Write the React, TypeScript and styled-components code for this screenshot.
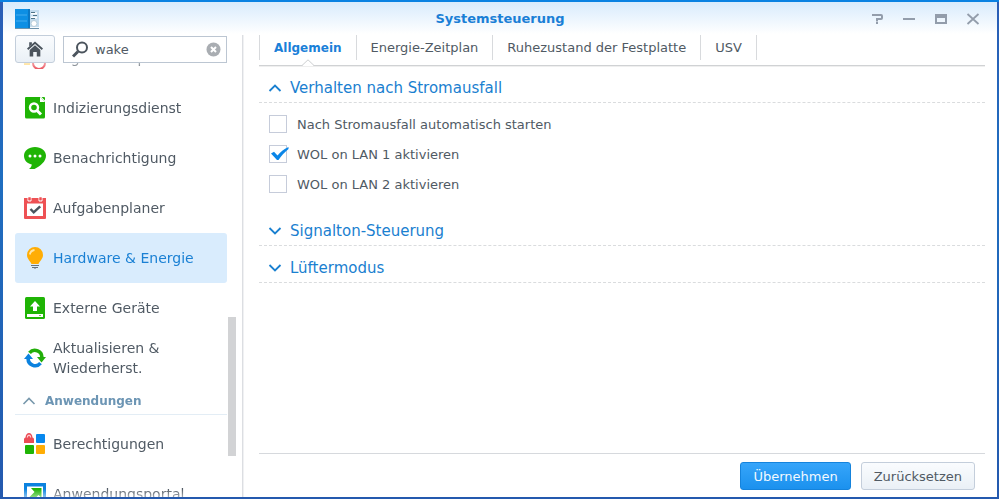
import React, { useLayoutEffect, useRef, useState } from "react";
import styled, { createGlobalStyle, css } from "styled-components";

const GlobalStyle = createGlobalStyle`
  * { box-sizing: border-box; }
  body { margin: 0; background: #ffffff; }
  body, button, input { font-family: "DejaVu Sans", Verdana, sans-serif; font-size: 13px; color: #505a64; }
  button { cursor: pointer; }
`;

const Desktop = styled.div`
  display: flex;
  height: 100vh;
  padding: 2px 2px 2px 3px;
  background: linear-gradient(#0a82e2 2px, transparent 2px), linear-gradient(#2b5db5, #1f6ec0 35%, #2459ae);
`;

const Window = styled.div`
  display: flex;
  flex-direction: column;
  flex: 1;
  min-width: 0;
  background: linear-gradient(#d8ebfc, #ffffff 32px);
`;

const TitleBar = styled.header`
  display: grid;
  grid-template-columns: 1fr auto 1fr;
  align-items: center;
  flex: none;
  height: 33px;
  padding: 0 12px;
`;

const Title = styled.h1`
  margin: 0;
  font-size: 13px;
  font-weight: bold;
  color: #1a7fd6;
`;

const WindowControls = styled.div`
  display: flex;
  justify-content: flex-end;
  gap: 16px;
  padding-right: 4px;
`;

const ControlButton = styled.button`
  display: flex;
  width: 16px;
  height: 16px;
  padding: 0;
  border: 0;
  background: none;
`;

const Body = styled.div`
  display: flex;
  flex: 1;
  min-height: 0;
`;

const Sidebar = styled.aside`
  display: flex;
  flex-direction: column;
  flex: none;
  width: 240px;
  padding-left: 12px;
  border-right: 1px solid #dcdee2;
  box-shadow: 1px 0 0 #f0f1f3;
`;

const SearchRow = styled.div`
  display: flex;
  gap: 8px;
  flex: none;
  height: 28px;
  padding-right: 15px;
`;

const HomeButton = styled.button`
  display: flex;
  align-items: center;
  justify-content: center;
  flex: none;
  width: 40px;
  padding: 0;
  border: 1px solid #c3cedb;
  border-radius: 3px;
  background: linear-gradient(#fafcfe, #eaf0f6);
`;

const SearchBox = styled.div`
  display: flex;
  align-items: center;
  gap: 6px;
  flex: 1;
  min-width: 0;
  margin-top: 1px;
  padding: 0 5px 0 8px;
  border: 1px solid #bcc6d2;
  background: #ffffff;
`;

const SearchInput = styled.input`
  flex: 1;
  min-width: 0;
  padding: 0;
  border: 0;
  outline: none;
  background: none;
`;

const ClearButton = styled.button`
  display: flex;
  padding: 0;
  border: 0;
  background: none;
`;

const ScrollRegion = styled.div`
  display: flex;
  flex: 1;
  min-height: 0;
`;

const NavScroller = styled.nav`
  flex: 1;
  min-width: 0;
  overflow: hidden;
  mask-image: linear-gradient(rgba(0, 0, 0, 0.5), #000 8px, #000 calc(100% - 8px), rgba(0, 0, 0, 0.5));
`;

const NavItem = styled.a<{ $active?: boolean }>`
  display: flex;
  align-items: center;
  gap: 6px;
  height: 50px;
  padding: 0 8px;
  border-radius: 3px;
  font-size: 14px;
  line-height: 20px;
  text-decoration: none;
  color: ${(p) => (p.$active ? "#1a80d4" : "#505a64")};
  background: ${(p) => (p.$active ? "#d9ecfd" : "transparent")};
  svg { flex: none; }
`;

const GroupButton = styled.button`
  display: flex;
  align-items: center;
  gap: 9px;
  width: 100%;
  height: 32px;
  margin-bottom: 4px;
  padding: 4px 7px 0;
  border: 0;
  border-bottom: 1px solid #e3edf5;
  background: none;
  font-size: 12px;
  font-weight: bold;
  color: #6c95b4;
`;

const ScrollTrack = styled.div`
  display: grid;
  grid-template-rows: 254fr 139fr 41fr;
  width: 15px;
  padding: 0 6px 0 1px;
`;

const ScrollThumb = styled.div`
  grid-row: 2;
  background: #d2d3d5;
`;

const Main = styled.main`
  display: flex;
  flex-direction: column;
  flex: 1;
  min-width: 0;
  padding: 0 12px 0 16px;
`;

const TabList = styled.div`
  display: flex;
  flex: none;
  height: 31px;
  border-bottom: 1px solid #d0d2d4;
  box-shadow: 0 1px 0 #efefef;
`;

const Tab = styled.button<{ $active?: boolean }>`
  position: relative;
  height: 25px;
  padding: 0 14px;
  border: 0;
  border-right: 1px solid #d8dadd;
  background: none;
  white-space: nowrap;
  &:first-child { border-left: 1px solid #d8dadd; }
  ${(p) =>
    p.$active &&
    css`
      font-size: 12px;
      font-weight: bold;
      color: #1a80d8;
    `}
`;

const TabPointer = styled.svg`
  position: absolute;
  top: 24px;
  left: calc(50% - 6px);
`;

const Panel = styled.div`
  flex: 1;
  min-height: 0;
`;

const SectionHeader = styled.button`
  display: flex;
  align-items: center;
  gap: 8px;
  width: 100%;
  height: 37px;
  padding: 8px 9px 0;
  border: 0;
  border-bottom: 1px dashed #dadcde;
  background: none;
  font-size: 15px;
  color: #1a80d0;
`;

const SectionBody = styled.div`
  padding: 6px 10px 10px;
`;

const CheckRow = styled.label`
  display: flex;
  align-items: center;
  gap: 10px;
  height: 30px;
  font-size: 13px;
`;

const CheckFrame = styled.span`
  position: relative;
  display: flex;
`;

const CheckInput = styled.input`
  appearance: none;
  width: 18px;
  height: 18px;
  margin: 0;
  border: 1px solid #c6ccda;
  background: #ffffff;
`;

const CheckMark = styled.svg`
  position: absolute;
  top: 2px;
  left: 2px;
  pointer-events: none;
`;

const Footer = styled.footer`
  display: flex;
  justify-content: flex-end;
  gap: 10px;
  flex: none;
  height: 44px;
  padding: 8px 10px 7px;
  border-top: 1px solid #d6d9dd;
`;

const ActionButton = styled.button<{ $primary?: boolean }>`
  padding: 0 12px;
  border: 1px solid ${(p) => (p.$primary ? "#1583dc" : "#c4cedb")};
  border-radius: 3px;
  color: ${(p) => (p.$primary ? "#f2f9ff" : "#505a64")};
  background: ${(p) => (p.$primary ? "linear-gradient(#36a5fa, #1b91ee)" : "linear-gradient(#fafcfe, #eaf0f6)")};
`;

const AppLogo = () => (
  <svg width="24" height="20" viewBox="0 0 24 20" aria-hidden="true">
    <path d="M0 0h14v19H0z" fill="#0d8fe4" />
    <path d="M1 6h11M1 12h11" stroke="#45adf0" />
    <path d="M14 1h10v17H14z" fill="#c3dcee" />
    <path d="M13 0h2v19h-2z" fill="#0a78c6" />
    <path d="M16 4.500h6M16 8.500h6" stroke="#fff" strokeWidth="2" />
    <path d="M16 3.500h4M18 6.500h4M16 9.500h4" stroke="#4f7488" />
    <circle cx="19" cy="14.500" r="3" fill="#fff" stroke="#b6ccd9" />
    <path d="M0 19.500h24" stroke="#6d93ac" />
  </svg>
);

const Chevron = ({ up, color, width = 1.8 }: { up?: boolean; color: string; width?: number }) => (
  <svg width="14" height="12" viewBox="0 0 14 12" aria-hidden="true">
    <path d={up ? "M1.500 9 7 3.500 12.500 9" : "M1.500 3 7 8.500 12.500 3"} fill="none" stroke={color} strokeWidth={width} />
  </svg>
);

const icons = {
  region: (
    <>
      <path d="M2 3 11 1l9 11" fill="none" stroke="#b8e0a0" strokeWidth="3" />
      <path d="M0 15h6v3H0z" fill="#ffd36b" />
      <circle cx="15" cy="16" r="6" fill="#fff" stroke="#e8404c" strokeWidth="2" />
    </>
  ),
  index: (
    <>
      <path d="M2 0h14l5 5v15a1.500 1.500 0 0 1-1.500 1.500h-17A1.500 1.500 0 0 1 1 20V1a1 1 0 0 1 1-1z" fill="#1fb405" />
      <path d="M16 0v5h5z" fill="#fff" />
      <path d="m17.500 0 3.500 3.500V1a1 1 0 0 0-1-1z" fill="#1fb405" />
      <circle cx="10" cy="10.500" r="4" fill="none" stroke="#fff" strokeWidth="2.400" />
      <path d="m13 13.500 4 4" stroke="#fff" strokeWidth="3" />
    </>
  ),
  notify: (
    <>
      <path d="M11 0c6.200 0 11 3.700 11 8.700 0 5.800-5.500 10-11.500 13.300H5c1.800-1.300 2.600-2.600 2.800-4.500C3 16.500 0 13 0 8.700 0 3.700 4.800 0 11 0z" fill="#1fb405" />
      <circle cx="6" cy="9" r="1.500" fill="#fff" />
      <circle cx="11" cy="9" r="1.500" fill="#fff" />
      <circle cx="16" cy="9" r="1.500" fill="#fff" />
    </>
  ),
  tasks: (
    <>
      <path d="M0 1h22v20a1 1 0 0 1-1 1H1a1 1 0 0 1-1-1z" fill="#ee5154" />
      <path d="M3 6.500h16V19H3z" fill="#fff" />
      <path d="M4 0v4h3V0M15 0v4h3V0" fill="none" stroke="#fff" />
      <path d="M5 0v3M6 0v3M16 0v3M17 0v3" stroke="#ee5154" />
      <path d="m6.500 12 3.200 3.300 6.500-6" fill="none" stroke="#4a555e" strokeWidth="2.500" />
    </>
  ),
  bulb: (
    <>
      <path d="M11 0a8 8 0 0 1 8 8c0 4-3.500 6-4.500 9h-7C6.500 14 3 12 3 8a8 8 0 0 1 8-8z" fill="#ffad05" />
      <path d="M5.800 7.500A5.500 5.500 0 0 1 10.500 3" fill="none" stroke="#ffe4a5" strokeWidth="1.800" />
      <path d="M7 18.500h8M8 20.500h6" stroke="#68737b" />
      <path d="M10 22h2" stroke="#68737b" />
    </>
  ),
  device: (
    <>
      <rect x="1" y="0" width="20" height="22" rx="1.500" fill="#1fb405" />
      <path d="m11 4 5 5.500h-3V14H9V9.500H6z" fill="#fff" />
      <path d="M3 17h16v3H3z" fill="#fff" />
      <path d="M15 18h2v1h-2z" fill="#75ca56" />
    </>
  ),
  update: (
    <>
      <path d="M5.500 5.800A7 7 0 0 1 17.800 11" fill="none" stroke="#23ae0a" strokeWidth="3.600" />
      <path d="M13 10h9l-4.500 5.500z" fill="#23ae0a" />
      <path d="M16.500 16.200A7 7 0 0 1 4.200 11" fill="none" stroke="#0b82df" strokeWidth="3.600" />
      <path d="M9 12H0l4.500-5.500z" fill="#0b82df" />
    </>
  ),
  rights: (
    <>
      <path d="M1.500 4.500C1.700 1.500 3.200 0 5 0s3.300 1.500 3.500 4.500c1 .2 1.500 1 1.500 2V10H0V6.500c0-1 .5-1.800 1.500-2z" fill="#ec4c56" />
      <path d="M3.300 4.500C3.500 2.700 4.300 2.200 5 2.200s1.500.5 1.700 2.300" fill="none" stroke="#ffd5d7" strokeWidth="1.200" />
      <rect x="12" y="1" width="9" height="9" rx="1" fill="#0788ee" />
      <rect x="1" y="12" width="9" height="9" rx="1" fill="#1fb405" />
      <rect x="12" y="12" width="9" height="9" rx="1" fill="#ffad05" />
    </>
  ),
  portal: (
    <>
      <path d="M0 0h22v22H0z" fill="#0b82df" />
      <path d="M3 3.500h16V19H3z" fill="#fff" />
      <path d="M7 5h10.500v10l-3-3-6 6L5 14.500l5.500-5.500z" fill="#1fb405" />
    </>
  ),
};

type IconName = keyof typeof icons;

const NavIcon = ({ name }: { name: IconName }) => (
  <svg width="24" height="22" viewBox="-1 0 24 22" aria-hidden="true">
    {icons[name]}
  </svg>
);

const systemItems: { icon: IconName; label: string }[] = [
  { icon: "region", label: "Regionale Optionen" },
  { icon: "index", label: "Indizierungsdienst" },
  { icon: "notify", label: "Benachrichtigung" },
  { icon: "tasks", label: "Aufgabenplaner" },
  { icon: "bulb", label: "Hardware & Energie" },
  { icon: "device", label: "Externe Geräte" },
  { icon: "update", label: "Aktualisieren & Wiederherst." },
];

const appItems: { icon: IconName; label: string }[] = [
  { icon: "rights", label: "Berechtigungen" },
  { icon: "portal", label: "Anwendungsportal" },
];

const tabs = ["Allgemein", "Energie-Zeitplan", "Ruhezustand der Festplatte", "USV"];

function Option({ label, initial = false }: { label: string; initial?: boolean }) {
  const [checked, setChecked] = useState(initial);
  return (
    <CheckRow>
      <CheckFrame>
        <CheckInput type="checkbox" checked={checked} onChange={(e) => setChecked(e.target.checked)} />
        {checked && (
          <CheckMark width="18" height="14" viewBox="0 0 18 14" aria-hidden="true">
            <path d="m0 6.500 3-1.700 3.500 3.700C9.500 5 12.500 2 17.500 0v2C13 5.500 10.500 9 7.500 13H6z" fill="#0a86e8" />
          </CheckMark>
        )}
      </CheckFrame>
      {label}
    </CheckRow>
  );
}

export default function App() {
  const [query, setQuery] = useState("wake");
  const [page, setPage] = useState("Hardware & Energie");
  const [tab, setTab] = useState(tabs[0]);
  const scroller = useRef<HTMLElement>(null);

  useLayoutEffect(() => {
    if (scroller.current) scroller.current.scrollTop = 30;
  }, []);

  const renderItem = ({ icon, label }: { icon: IconName; label: string }) => (
    <NavItem key={label} href="#" $active={page === label} onClick={() => setPage(label)}>
      <NavIcon name={icon} />
      {label}
    </NavItem>
  );

  return (
    <Desktop>
      <GlobalStyle />
      <Window>
        <TitleBar>
          <AppLogo />
          <Title>Systemsteuerung</Title>
          <WindowControls>
            <ControlButton aria-label="Hilfe">
              <svg width="16" height="16" viewBox="0 0 16 16" fill="none" stroke="#939dab" strokeWidth="2">
                <path d="M3 4h9a1 1 0 0 1 1 1v2a1 1 0 0 1-1 1H8v2.500M7 12h2" />
              </svg>
            </ControlButton>
            <ControlButton aria-label="Minimieren">
              <svg width="16" height="16" viewBox="0 0 16 16" stroke="#939dab" strokeWidth="2">
                <path d="M2 8h12" />
              </svg>
            </ControlButton>
            <ControlButton aria-label="Maximieren">
              <svg width="16" height="16" viewBox="0 0 16 16" fill="none" stroke="#939dab">
                <path d="M2 5h12" strokeWidth="4" />
                <path d="M3 5v7h10V5" strokeWidth="2" />
              </svg>
            </ControlButton>
            <ControlButton aria-label="Schließen">
              <svg width="16" height="16" viewBox="0 0 16 16" stroke="#939dab" strokeWidth="1.800">
                <path d="m2.500 3 11 10M13.500 3l-11 10" />
              </svg>
            </ControlButton>
          </WindowControls>
        </TitleBar>
        <Body>
          <Sidebar>
            <SearchRow>
              <HomeButton aria-label="Startseite">
                <svg width="16" height="16" viewBox="0 0 18 17" fill="#4b545d" aria-hidden="true">
                  <path d="M9 0 18 8l-1.400 1.500L9 2.900 1.400 9.500 0 8z" />
                  <path d="M9 4.300 15 9.500V17h-4v-5H7v5H3V9.500zM2.500 1h3v2.300l-3 2.500z" />
                </svg>
              </HomeButton>
              <SearchBox>
                <svg width="17" height="17" viewBox="0 0 17 17" fill="none" stroke="#4b545d" aria-hidden="true">
                  <circle cx="10" cy="6.500" r="5" strokeWidth="2" />
                  <path d="m6 10.500-5 5" strokeWidth="3" />
                </svg>
                <SearchInput aria-label="Suche" value={query} onChange={(e) => setQuery(e.target.value)} />
                <ClearButton aria-label="Suche löschen" onClick={() => setQuery("")}>
                  <svg width="15" height="15" viewBox="0 0 15 15" aria-hidden="true">
                    <circle cx="7.500" cy="7.500" r="7" fill="#a9adb2" />
                    <path d="m5 5 5 5m0-5-5 5" stroke="#fff" strokeWidth="2" />
                  </svg>
                </ClearButton>
              </SearchBox>
            </SearchRow>
            <ScrollRegion>
              <NavScroller ref={scroller}>
                {systemItems.map(renderItem)}
                <GroupButton>
                  <Chevron up color="#7898ac" width={1.6} />
                  Anwendungen
                </GroupButton>
                {appItems.map(renderItem)}
              </NavScroller>
              <ScrollTrack>
                <ScrollThumb />
              </ScrollTrack>
            </ScrollRegion>
          </Sidebar>
          <Main>
            <TabList role="tablist">
              {tabs.map((name) => (
                <Tab key={name} role="tab" aria-selected={tab === name} $active={tab === name} onClick={() => setTab(name)}>
                  {name}
                  {tab === name && (
                    <TabPointer width="12" height="7" viewBox="0 0 12 7" aria-hidden="true">
                      <path d="M0 7 6 1l6 6z" fill="#fff" />
                      <path d="M0 6.500 6 .8l6 5.700" fill="none" stroke="#ccced0" />
                    </TabPointer>
                  )}
                </Tab>
              ))}
            </TabList>
            <Panel role="tabpanel">
              <SectionHeader aria-expanded="true">
                <Chevron up color="#1a80d0" />
                Verhalten nach Stromausfall
              </SectionHeader>
              <SectionBody>
                <Option label="Nach Stromausfall automatisch starten" />
                <Option label="WOL on LAN 1 aktivieren" initial />
                <Option label="WOL on LAN 2 aktivieren" />
              </SectionBody>
              <SectionHeader aria-expanded="false">
                <Chevron color="#1a80d0" />
                Signalton-Steuerung
              </SectionHeader>
              <SectionHeader aria-expanded="false">
                <Chevron color="#1a80d0" />
                Lüftermodus
              </SectionHeader>
            </Panel>
            <Footer>
              <ActionButton $primary>Übernehmen</ActionButton>
              <ActionButton>Zurücksetzen</ActionButton>
            </Footer>
          </Main>
        </Body>
      </Window>
    </Desktop>
  );
}
